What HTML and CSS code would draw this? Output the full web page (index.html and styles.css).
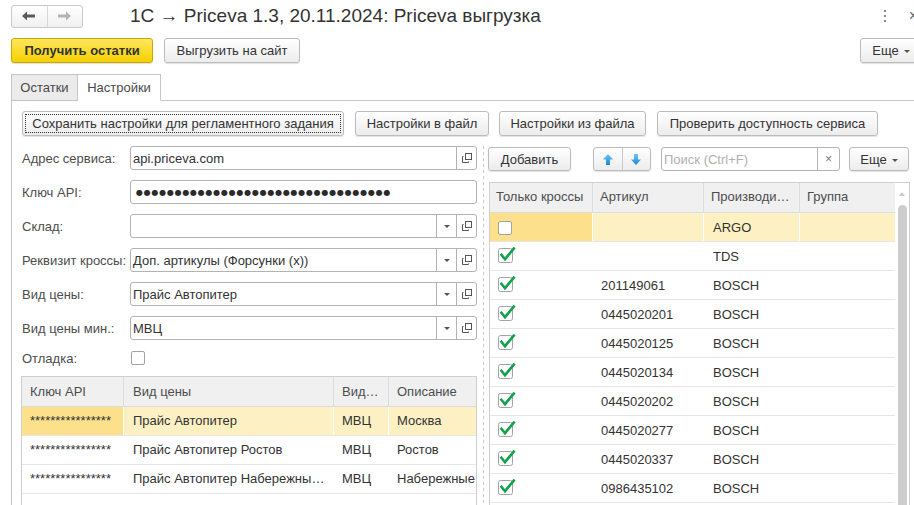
FILE: index.html
```html
<!DOCTYPE html>
<html lang="ru">
<head>
<meta charset="utf-8">
<title>Priceva выгрузка</title>
<link rel="stylesheet" href="styles.css">
</head>
<body>
<div class="page">
  <div class="top">
    <div class="nav">
      <div class="nav-btn"><svg width="14" height="10" viewBox="0 0 14 10"><polygon points="0,5 5,0.5 5,3.5 13,3.5 13,6.5 5,6.5 5,9.5" fill="#5a5a5a"/></svg></div>
      <div class="nav-btn"><svg width="14" height="10" viewBox="0 0 14 10"><polygon points="13,5 8,0.5 8,3.5 0,3.5 0,6.5 8,6.5 8,9.5" fill="#b4b4b4"/></svg></div>
    </div>
    <div class="title">1С → Priceva 1.3, 20.11.2024: Priceva выгрузка</div>
    <div class="win-icons">
      <svg class="kebab" width="4" height="12" viewBox="0 0 4 12"><rect x="1" y="0" width="2" height="2" fill="#8a8a8a"/><rect x="1" y="5" width="2" height="2" fill="#8a8a8a"/><rect x="1" y="10" width="2" height="2" fill="#8a8a8a"/></svg>
      <span class="close">×</span>
    </div>
  </div>

  <div class="cmd">
    <button class="btn btn-primary">Получить остатки</button>
    <button class="btn">Выгрузить на сайт</button>
    <button class="btn btn-more">Еще <span class="caret"></span></button>
  </div>

  <div class="tabs">
    <div class="tab tab-1">Остатки</div>
    <div class="tab tab-2 active">Настройки</div>
    <div class="tab-fill"></div>
  </div>

  <div class="panel">
    <div class="actions">
      <button class="btn focus w-save">Сохранить настройки для регламентного задания</button>
      <button class="btn w-tofile">Настройки в файл</button>
      <button class="btn w-fromfile">Настройки из файла</button>
      <button class="btn w-check">Проверить доступность сервиса</button>
    </div>

    <div class="main">
      <div class="left">
        <div class="row">
          <div class="label">Адрес сервиса:</div>
          <div class="field">
            <div class="field-val">api.priceva.com</div>
            <div class="fbtn"><svg width="10" height="10" viewBox="0 0 10 10"><rect x="3.5" y="0.5" width="6" height="6" fill="none" stroke="#555"/><path d="M1.5 3.5 H0.5 V9.5 H6.5 V8.5" fill="none" stroke="#555"/></svg></div>
          </div>
        </div>
        <div class="row">
          <div class="label">Ключ API:</div>
          <div class="field">
            <div class="field-val dots">●●●●●●●●●●●●●●●●●●●●●●●●●●●●●●●●●</div>
          </div>
        </div>
        <div class="row">
          <div class="label">Склад:</div>
          <div class="field">
            <div class="field-val"></div>
            <div class="fbtn"><span class="caret"></span></div>
            <div class="fbtn"><svg width="10" height="10" viewBox="0 0 10 10"><rect x="3.5" y="0.5" width="6" height="6" fill="none" stroke="#555"/><path d="M1.5 3.5 H0.5 V9.5 H6.5 V8.5" fill="none" stroke="#555"/></svg></div>
          </div>
        </div>
        <div class="row">
          <div class="label">Реквизит кроссы:</div>
          <div class="field">
            <div class="field-val">Доп. артикулы (Форсунки (x))</div>
            <div class="fbtn"><span class="caret"></span></div>
            <div class="fbtn"><svg width="10" height="10" viewBox="0 0 10 10"><rect x="3.5" y="0.5" width="6" height="6" fill="none" stroke="#555"/><path d="M1.5 3.5 H0.5 V9.5 H6.5 V8.5" fill="none" stroke="#555"/></svg></div>
          </div>
        </div>
        <div class="row">
          <div class="label">Вид цены:</div>
          <div class="field">
            <div class="field-val">Прайс Автопитер</div>
            <div class="fbtn"><span class="caret"></span></div>
            <div class="fbtn"><svg width="10" height="10" viewBox="0 0 10 10"><rect x="3.5" y="0.5" width="6" height="6" fill="none" stroke="#555"/><path d="M1.5 3.5 H0.5 V9.5 H6.5 V8.5" fill="none" stroke="#555"/></svg></div>
          </div>
        </div>
        <div class="row">
          <div class="label">Вид цены мин.:</div>
          <div class="field">
            <div class="field-val">МВЦ</div>
            <div class="fbtn"><span class="caret"></span></div>
            <div class="fbtn"><svg width="10" height="10" viewBox="0 0 10 10"><rect x="3.5" y="0.5" width="6" height="6" fill="none" stroke="#555"/><path d="M1.5 3.5 H0.5 V9.5 H6.5 V8.5" fill="none" stroke="#555"/></svg></div>
          </div>
        </div>
        <div class="row row-check">
          <div class="label">Отладка:</div>
          <div class="checkbox"></div>
        </div>

        <div class="ltable">
          <div class="lhead">
            <div class="cell">Ключ API</div>
            <div class="cell">Вид цены</div>
            <div class="cell">Вид цены мин.</div>
            <div class="cell clip">Описание</div>
          </div>
          <div class="lrow selected">
            <div class="cell stars">****************</div>
            <div class="cell">Прайс Автопитер</div>
            <div class="cell">МВЦ</div>
            <div class="cell clip">Москва</div>
          </div>
          <div class="lrow">
            <div class="cell stars">****************</div>
            <div class="cell">Прайс Автопитер Ростов</div>
            <div class="cell">МВЦ</div>
            <div class="cell clip">Ростов</div>
          </div>
          <div class="lrow">
            <div class="cell stars">****************</div>
            <div class="cell">Прайс Автопитер Набережные Челны</div>
            <div class="cell">МВЦ</div>
            <div class="cell clip">Набережные Челны</div>
          </div>
        </div>
      </div>

      <div class="splitter"></div>

      <div class="right">
        <div class="rtool">
          <button class="btn w-add">Добавить</button>
          <div class="updown">
            <div class="ud-btn"><svg width="10" height="11" viewBox="0 0 10 11"><defs><linearGradient id="ga" x1="0" y1="0" x2="0" y2="1"><stop offset="0" stop-color="#6cc6f7"/><stop offset="1" stop-color="#1f86d6"/></linearGradient></defs><polygon points="5,0 10,5.5 7,5.5 7,11 3,11 3,5.5 0,5.5" fill="url(#ga)"/></svg></div>
            <div class="ud-btn"><svg width="10" height="11" viewBox="0 0 10 11"><defs><linearGradient id="gb" x1="0" y1="0" x2="0" y2="1"><stop offset="0" stop-color="#6cc6f7"/><stop offset="1" stop-color="#1f86d6"/></linearGradient></defs><polygon points="5,11 10,5.5 7,5.5 7,0 3,0 3,5.5 0,5.5" fill="url(#gb)"/></svg></div>
          </div>
          <div class="search">
            <div class="search-val">Поиск (Ctrl+F)</div>
            <div class="search-x">×</div>
          </div>
          <button class="btn w-more2">Еще <span class="caret"></span></button>
        </div>

        <div class="rtable">
          <div class="rcols">
            <div class="rhead">
              <div class="cell">Только кроссы</div>
              <div class="cell">Артикул</div>
              <div class="cell">Производитель</div>
              <div class="cell">Группа</div>
            </div>
            <div class="rrow selected">
              <div class="cell"><div class="checkbox"></div></div>
              <div class="cell"></div>
              <div class="cell">ARGO</div>
              <div class="cell"></div>
            </div>
            <div class="rrow">
              <div class="cell"><svg class="chk" width="18" height="16" viewBox="0 0 18 16"><rect x="0.5" y="1.5" width="14" height="14" rx="2" fill="#fff" stroke="#a3a3a3"/><path d="M2.6 6.8 L7 12.2 L16.6 0.6" fill="none" stroke="#14a04c" stroke-width="2.6"/></svg></div>
              <div class="cell"></div>
              <div class="cell">TDS</div>
              <div class="cell"></div>
            </div>
            <div class="rrow">
              <div class="cell"><svg class="chk" width="18" height="16" viewBox="0 0 18 16"><rect x="0.5" y="1.5" width="14" height="14" rx="2" fill="#fff" stroke="#a3a3a3"/><path d="M2.6 6.8 L7 12.2 L16.6 0.6" fill="none" stroke="#14a04c" stroke-width="2.6"/></svg></div>
              <div class="cell">201149061</div>
              <div class="cell">BOSCH</div>
              <div class="cell"></div>
            </div>
            <div class="rrow">
              <div class="cell"><svg class="chk" width="18" height="16" viewBox="0 0 18 16"><rect x="0.5" y="1.5" width="14" height="14" rx="2" fill="#fff" stroke="#a3a3a3"/><path d="M2.6 6.8 L7 12.2 L16.6 0.6" fill="none" stroke="#14a04c" stroke-width="2.6"/></svg></div>
              <div class="cell">0445020201</div>
              <div class="cell">BOSCH</div>
              <div class="cell"></div>
            </div>
            <div class="rrow">
              <div class="cell"><svg class="chk" width="18" height="16" viewBox="0 0 18 16"><rect x="0.5" y="1.5" width="14" height="14" rx="2" fill="#fff" stroke="#a3a3a3"/><path d="M2.6 6.8 L7 12.2 L16.6 0.6" fill="none" stroke="#14a04c" stroke-width="2.6"/></svg></div>
              <div class="cell">0445020125</div>
              <div class="cell">BOSCH</div>
              <div class="cell"></div>
            </div>
            <div class="rrow">
              <div class="cell"><svg class="chk" width="18" height="16" viewBox="0 0 18 16"><rect x="0.5" y="1.5" width="14" height="14" rx="2" fill="#fff" stroke="#a3a3a3"/><path d="M2.6 6.8 L7 12.2 L16.6 0.6" fill="none" stroke="#14a04c" stroke-width="2.6"/></svg></div>
              <div class="cell">0445020134</div>
              <div class="cell">BOSCH</div>
              <div class="cell"></div>
            </div>
            <div class="rrow">
              <div class="cell"><svg class="chk" width="18" height="16" viewBox="0 0 18 16"><rect x="0.5" y="1.5" width="14" height="14" rx="2" fill="#fff" stroke="#a3a3a3"/><path d="M2.6 6.8 L7 12.2 L16.6 0.6" fill="none" stroke="#14a04c" stroke-width="2.6"/></svg></div>
              <div class="cell">0445020202</div>
              <div class="cell">BOSCH</div>
              <div class="cell"></div>
            </div>
            <div class="rrow">
              <div class="cell"><svg class="chk" width="18" height="16" viewBox="0 0 18 16"><rect x="0.5" y="1.5" width="14" height="14" rx="2" fill="#fff" stroke="#a3a3a3"/><path d="M2.6 6.8 L7 12.2 L16.6 0.6" fill="none" stroke="#14a04c" stroke-width="2.6"/></svg></div>
              <div class="cell">0445020277</div>
              <div class="cell">BOSCH</div>
              <div class="cell"></div>
            </div>
            <div class="rrow">
              <div class="cell"><svg class="chk" width="18" height="16" viewBox="0 0 18 16"><rect x="0.5" y="1.5" width="14" height="14" rx="2" fill="#fff" stroke="#a3a3a3"/><path d="M2.6 6.8 L7 12.2 L16.6 0.6" fill="none" stroke="#14a04c" stroke-width="2.6"/></svg></div>
              <div class="cell">0445020337</div>
              <div class="cell">BOSCH</div>
              <div class="cell"></div>
            </div>
            <div class="rrow">
              <div class="cell"><svg class="chk" width="18" height="16" viewBox="0 0 18 16"><rect x="0.5" y="1.5" width="14" height="14" rx="2" fill="#fff" stroke="#a3a3a3"/><path d="M2.6 6.8 L7 12.2 L16.6 0.6" fill="none" stroke="#14a04c" stroke-width="2.6"/></svg></div>
              <div class="cell">0986435102</div>
              <div class="cell">BOSCH</div>
              <div class="cell"></div>
            </div>
            <div class="rrow">
              <div class="cell"></div>
              <div class="cell"></div>
              <div class="cell"></div>
              <div class="cell"></div>
            </div>
          </div>
          <div class="scrollbar">
            <div class="sb-up"></div>
            <div class="sb-thumb"></div>
          </div>
        </div>
      </div>
    </div>
  </div>
</div>
</body>
</html>
```

FILE: styles.css
```css
* { box-sizing: border-box; }

html, body {
  margin: 0;
  padding: 0;
}

body {
  width: 914px;
  height: 505px;
  overflow: hidden;
  background: #fff;
  font-family: "Liberation Sans", Arial, sans-serif;
  font-size: 13px;
  color: #333;
}

.page {
  width: 930px;
  height: 505px;
  overflow: hidden;
}

/* ---------- title bar ---------- */
.top {
  display: flex;
  align-items: center;
  height: 32px;
  padding-left: 11px;
  padding-right: 12px;
}

.nav {
  display: flex;
  width: 72px;
  height: 23px;
  border: 1px solid #c9c9c9;
  border-radius: 3px;
  background: linear-gradient(#ffffff, #f0f0f0);
}

.nav-btn {
  flex: 1;
  display: flex;
  align-items: center;
  justify-content: center;
}

.nav-btn + .nav-btn {
  border-left: 1px solid #d8d8d8;
}

.title {
  margin-left: 47px;
  font-size: 19px;
  color: #333;
  white-space: nowrap;
}

.win-icons {
  margin-left: auto;
  display: flex;
  align-items: center;
  gap: 22px;
}

.close {
  font-size: 16px;
  color: #666;
  line-height: 1;
}

/* ---------- buttons ---------- */
.btn {
  height: 25px;
  padding: 0 12px;
  border: 1px solid #bcbcbc;
  border-radius: 3px;
  background: linear-gradient(#ffffff, #ececec);
  box-shadow: 0 1px 1px rgba(0, 0, 0, 0.12);
  display: flex;
  align-items: center;
  justify-content: center;
  font-family: inherit;
  font-size: 13px;
  color: #333;
  white-space: nowrap;
  margin: 0;
}

.btn-primary {
  background: linear-gradient(#ffe65e, #f4d100);
  border-color: #c9a800;
  font-weight: bold;
  width: 142px;
}

.caret {
  display: inline-block;
  width: 0;
  height: 0;
  border-left: 3px solid transparent;
  border-right: 3px solid transparent;
  border-top: 3px solid #555;
}

.btn .caret {
  margin-left: 5px;
  margin-top: 2px;
}

/* ---------- command bar ---------- */
.cmd {
  display: flex;
  gap: 11px;
  margin-top: 6px;
  padding-left: 11px;
  padding-right: 8px;
}

.cmd .btn:nth-child(2) {
  width: 136px;
}

.btn-more {
  margin-left: auto;
  width: 62px;
}

/* ---------- tabs ---------- */
.tabs {
  display: flex;
  margin-top: 11px;
  padding-left: 11px;
  height: 27px;
}

.tab {
  height: 27px;
  border: 1px solid #c5c5c5;
  background: #ebebeb;
  display: flex;
  align-items: center;
  justify-content: center;
  color: #4a4a4a;
}

.tab-1 {
  width: 67px;
}

.tab-2 {
  width: 83px;
}

.tab.active {
  background: #fff;
  border-left: none;
  border-bottom-color: #fff;
}

.tab-fill {
  flex: 1;
  border-bottom: 1px solid #c5c5c5;
}

/* ---------- panel ---------- */
.panel {
  margin-left: 11px;
  border-left: 1px solid #c5c5c5;
  padding: 10px 0 0 10px;
  height: 410px;
}

.actions {
  display: flex;
}

.focus {
  outline: 1px dotted #333;
  outline-offset: -4px;
}

.w-save { width: 322px; }
.w-tofile { width: 134px; margin-left: 11px; }
.w-fromfile { width: 147px; margin-left: 10px; }
.w-check { width: 221px; margin-left: 11px; }

.main {
  display: flex;
  margin-top: 10px;
}

.left {
  width: 455px;
}

.splitter {
  width: 12px;
  background: repeating-linear-gradient(to bottom, #c9c9c9 0 3px, transparent 3px 6px) no-repeat 6px 0 / 1px 100%;
}

.right {
  width: 421px;
}

/* ---------- form ---------- */
.row {
  display: flex;
  align-items: center;
  height: 24px;
  margin-bottom: 10px;
}

.label {
  width: 108px;
  color: #4d4d4d;
  white-space: nowrap;
}

.field {
  width: 347px;
  height: 24px;
  border: 1px solid #b3b3b3;
  border-radius: 3px;
  display: flex;
  background: #fff;
}

.field-val {
  flex: 1;
  padding: 0 2px;
  display: flex;
  align-items: center;
  color: #333;
  white-space: nowrap;
  overflow: hidden;
}

.dots {
  font-family: "DejaVu Sans", sans-serif;
  font-size: 8px;
  letter-spacing: 0.75px;
  color: #2a2a2a;
  padding-left: 5px;
}

.fbtn {
  width: 20px;
  border-left: 1px solid #b3b3b3;
  display: flex;
  align-items: center;
  justify-content: center;
}

.row-check {
  height: 16px;
  margin-bottom: 10px;
}

.checkbox {
  width: 14px;
  height: 14px;
  border: 1px solid #a3a3a3;
  border-radius: 2px;
  background: #fff;
}

.row-check .checkbox {
  margin-left: 1px;
}

/* ---------- left table ---------- */
.ltable {
  width: 456px;
  margin-left: -1px;
  border: 1px solid #cfcfcf;
  border-bottom: none;
  height: 130px;
}

.lhead,
.lrow {
  display: grid;
  grid-template-columns: 102px 210px 55px 87px;
}

.lhead {
  height: 30px;
  background: #f0f0f0;
  border-bottom: 1px solid #dcdcdc;
}

.lhead .cell {
  border-right: 1px solid #dcdcdc;
  color: #4d4d4d;
  line-height: 29px;
}

.lhead .cell:last-child {
  border-right: none;
}

.cell {
  padding: 0 8px;
  white-space: nowrap;
  overflow: hidden;
  text-overflow: ellipsis;
}

.cell.clip {
  text-overflow: clip;
  padding-right: 0;
}

.lrow {
  height: 29px;
  border-bottom: 1px solid #e6e6e6;
}

.lrow .cell {
  line-height: 28px;
  color: #333;
}

.lrow .cell:nth-child(2) {
  padding-left: 9px;
}

.lhead .cell:nth-child(2) {
  padding-left: 9px;
}

.stars {
  font-size: 13px;
}

.selected .cell {
  background: #fdf1c3;
  border-right: 1px solid #fff;
}

.selected .cell:first-child {
  background: #fce08c;
}

.selected .cell:last-child {
  border-right: none;
}

/* ---------- right toolbar ---------- */
.rtool {
  display: flex;
  height: 24px;
  margin-top: 1px;
  margin-bottom: 11px;
}

.rtool .btn {
  height: 24px;
}

.w-add {
  width: 83px;
  margin-left: -1px;
}

.updown {
  display: flex;
  width: 58px;
  margin-left: 22px;
  border: 1px solid #bcbcbc;
  border-radius: 3px;
  background: linear-gradient(#ffffff, #ececec);
  box-shadow: 0 1px 1px rgba(0, 0, 0, 0.12);
}

.ud-btn {
  flex: 1;
  display: flex;
  align-items: center;
  justify-content: center;
}

.ud-btn + .ud-btn {
  border-left: 1px solid #c9c9c9;
}

.search {
  display: flex;
  width: 179px;
  margin-left: 10px;
  border: 1px solid #b3b3b3;
  border-radius: 3px;
  background: #fff;
}

.search-val {
  flex: 1;
  display: flex;
  align-items: center;
  padding-left: 2px;
  color: #b0b0b0;
}

.search-x {
  width: 22px;
  border-left: 1px solid #b3b3b3;
  display: flex;
  align-items: center;
  justify-content: center;
  color: #777;
  font-size: 12px;
}

.w-more2 {
  width: 60px;
  margin-left: 9px;
}

/* ---------- right table ---------- */
.rtable {
  width: 421px;
  border: 1px solid #cfcfcf;
  border-bottom: none;
  display: flex;
  height: 330px;
}

.rcols {
  width: 405px;
}

.rhead,
.rrow {
  display: grid;
  grid-template-columns: 103px 111px 96px 95px;
}

.rhead {
  height: 30px;
  background: #f0f0f0;
  border-bottom: 1px solid #dcdcdc;
}

.rhead .cell {
  border-right: 1px solid #dcdcdc;
  color: #4d4d4d;
  line-height: 28px;
  padding-left: 7px;
}

.rhead .cell:first-child {
  padding-left: 6px;
}

.rhead .cell:last-child {
  border-right: none;
}

.rrow {
  height: 29px;
  border-bottom: 1px solid #e6e6e6;
}

.rrow .cell {
  display: flex;
  align-items: center;
  color: #333;
  padding-left: 8px;
}

.rrow .cell:nth-child(3) {
  padding-left: 9px;
}

.rrow .checkbox {
  margin-top: 1px;
}

.chk {
  display: block;
  margin-top: -2px;
}

.scrollbar {
  width: 14px;
  display: flex;
  flex-direction: column;
  align-items: center;
  background: #fff;
}

.sb-up {
  margin-top: 9px;
  width: 0;
  height: 0;
  border-left: 3px solid transparent;
  border-right: 3px solid transparent;
  border-bottom: 4px solid #c8c8c8;
}

.sb-thumb {
  margin-top: 9px;
  width: 9px;
  flex: 1;
  border-radius: 5px 5px 0 0;
  background: #cdcdcd;
}
```
